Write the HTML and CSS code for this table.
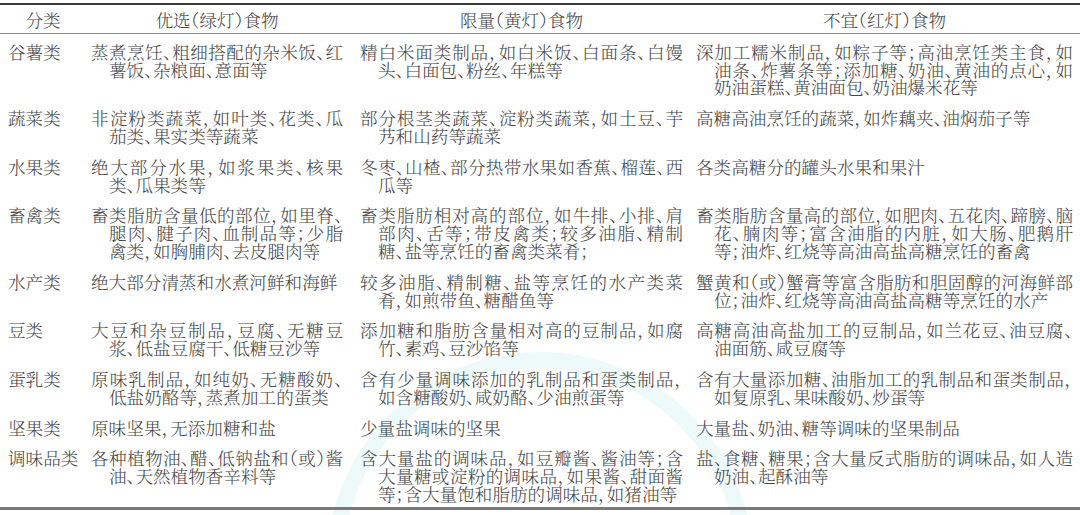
FILE: index.html
```html
<!DOCTYPE html>
<html lang="zh-CN">
<head>
<meta charset="utf-8">
<title>食物红绿灯</title>
<link rel="stylesheet" href="styles.css">
</head>
<body>
<svg class="watermark" width="1080" height="515" viewBox="0 0 1080 515" aria-hidden="true">
  <circle cx="540" cy="565" r="205" fill="none" stroke="#eef9fa" stroke-width="16"/>
</svg>
<div class="table">
  <div class="row head">
    <div class="cell c1 center">分类</div>
    <div class="cell c2 center">优选（绿灯）食物</div>
    <div class="cell c3 center">限量（黄灯）食物</div>
    <div class="cell c4 center">不宜（红灯）食物</div>
  </div>

  <div class="row">
    <div class="cell c1">谷薯类</div>
    <div class="cell c2"><span class="ln j">蒸煮烹饪、粗细搭配的杂米饭、红</span><span class="ln in">薯饭、杂粮面、意面等</span></div>
    <div class="cell c3"><span class="ln j">精白米面类制品，如白米饭、白面条、白馒</span><span class="ln in">头、白面包、粉丝、年糕等</span></div>
    <div class="cell c4"><span class="ln j">深加工糯米制品，如粽子等；高油烹饪类主食，如</span><span class="ln in j">油条、炸薯条等；添加糖、奶油、黄油的点心，如</span><span class="ln in">奶油蛋糕、黄油面包、奶油爆米花等</span></div>
  </div>

  <div class="row">
    <div class="cell c1">蔬菜类</div>
    <div class="cell c2"><span class="ln j">非淀粉类蔬菜，如叶类、花类、瓜</span><span class="ln in">茄类、果实类等蔬菜</span></div>
    <div class="cell c3"><span class="ln j">部分根茎类蔬菜、淀粉类蔬菜，如土豆、芋</span><span class="ln in">艿和山药等蔬菜</span></div>
    <div class="cell c4"><span class="ln">高糖高油烹饪的蔬菜，如炸藕夹、油焖茄子等</span></div>
  </div>

  <div class="row">
    <div class="cell c1">水果类</div>
    <div class="cell c2"><span class="ln j">绝大部分水果，如浆果类、核果</span><span class="ln in">类、瓜果类等</span></div>
    <div class="cell c3"><span class="ln j">冬枣、山楂、部分热带水果如香蕉、榴莲、西</span><span class="ln in">瓜等</span></div>
    <div class="cell c4"><span class="ln">各类高糖分的罐头水果和果汁</span></div>
  </div>

  <div class="row">
    <div class="cell c1">畜禽类</div>
    <div class="cell c2"><span class="ln j">畜类脂肪含量低的部位，如里脊、</span><span class="ln in j">腿肉、腱子肉、血制品等；少脂</span><span class="ln in">禽类，如胸脯肉、去皮腿肉等</span></div>
    <div class="cell c3"><span class="ln j">畜类脂肪相对高的部位，如牛排、小排、肩</span><span class="ln in j">部肉、舌等；带皮禽类；较多油脂、精制</span><span class="ln in">糖、盐等烹饪的畜禽类菜肴；</span></div>
    <div class="cell c4"><span class="ln j">畜类脂肪含量高的部位，如肥肉、五花肉、蹄膀、脑</span><span class="ln in j">花、腩肉等；富含油脂的内脏，如大肠、肥鹅肝</span><span class="ln in">等；油炸、红烧等高油高盐高糖烹饪的畜禽</span></div>
  </div>

  <div class="row">
    <div class="cell c1">水产类</div>
    <div class="cell c2"><span class="ln">绝大部分清蒸和水煮河鲜和海鲜</span></div>
    <div class="cell c3"><span class="ln j">较多油脂、精制糖、盐等烹饪的水产类菜</span><span class="ln in">肴，如煎带鱼、糖醋鱼等</span></div>
    <div class="cell c4"><span class="ln j">蟹黄和（或）蟹膏等富含脂肪和胆固醇的河海鲜部</span><span class="ln in">位；油炸、红烧等高油高盐高糖等烹饪的水产</span></div>
  </div>

  <div class="row">
    <div class="cell c1">豆类</div>
    <div class="cell c2"><span class="ln j">大豆和杂豆制品，豆腐、无糖豆</span><span class="ln in">浆、低盐豆腐干、低糖豆沙等</span></div>
    <div class="cell c3"><span class="ln j">添加糖和脂肪含量相对高的豆制品，如腐</span><span class="ln in">竹、素鸡、豆沙馅等</span></div>
    <div class="cell c4"><span class="ln j">高糖高油高盐加工的豆制品，如兰花豆、油豆腐、</span><span class="ln in">油面筋、咸豆腐等</span></div>
  </div>

  <div class="row">
    <div class="cell c1">蛋乳类</div>
    <div class="cell c2"><span class="ln j">原味乳制品，如纯奶、无糖酸奶、</span><span class="ln in">低盐奶酪等，蒸煮加工的蛋类</span></div>
    <div class="cell c3"><span class="ln j">含有少量调味添加的乳制品和蛋类制品，</span><span class="ln in">如含糖酸奶、咸奶酪、少油煎蛋等</span></div>
    <div class="cell c4"><span class="ln j">含有大量添加糖、油脂加工的乳制品和蛋类制品，</span><span class="ln in">如复原乳、果味酸奶、炒蛋等</span></div>
  </div>

  <div class="row">
    <div class="cell c1">坚果类</div>
    <div class="cell c2"><span class="ln">原味坚果，无添加糖和盐</span></div>
    <div class="cell c3"><span class="ln">少量盐调味的坚果</span></div>
    <div class="cell c4"><span class="ln">大量盐、奶油、糖等调味的坚果制品</span></div>
  </div>

  <div class="row last">
    <div class="cell c1">调味品类</div>
    <div class="cell c2"><span class="ln j">各种植物油、醋、低钠盐和（或）酱</span><span class="ln in">油、天然植物香辛料等</span></div>
    <div class="cell c3"><span class="ln j">含大量盐的调味品，如豆瓣酱、酱油等；含</span><span class="ln in j">大量糖或淀粉的调味品，如果酱、甜面酱</span><span class="ln in">等；含大量饱和脂肪的调味品，如猪油等</span></div>
    <div class="cell c4"><span class="ln j">盐、食糖、糖果；含大量反式脂肪的调味品，如人造</span><span class="ln in">奶油、起酥油等</span></div>
  </div>
</div>
</body>
</html>
```
FILE: styles.css
```css
html, body {
  margin: 0;
  padding: 0;
  background: #ffffff;
}

body {
  position: relative;
  width: 1080px;
  height: 515px;
  overflow: hidden;
  padding-top: 3px;
  box-sizing: border-box;
  font-family: "Noto Serif CJK SC", "Noto Sans CJK SC", serif;
  font-weight: 300;
  font-size: 17.6px;
  line-height: 17.8px;
  color: #474747;
  font-feature-settings: "halt" 1;
}

.watermark {
  position: absolute;
  left: 0;
  top: 0;
  pointer-events: none;
}

.table {
  position: relative;
  border-top: 2px solid #3a3a3a;
  border-bottom: 3px solid #7a7a7a;
}

.row {
  display: grid;
  grid-template-columns: 83px 269px 336px 392px;
  padding: 9px 0 4px;
}

.row.head {
  padding: 6px 0 4px;
  border-bottom: 1px solid #8c8c8c;
}

.cell {
  padding-left: 8px;
  white-space: nowrap;
}

.c1 { padding-right: 5px; }
.c2 { padding-right: 9px; }
.c3 { padding-right: 5px; }
.c4 { padding-right: 7px; }

.center {
  text-align: center;
}

.ln {
  display: block;
  text-align: left;
}

.ln.in {
  padding-left: 18px;
}

.ln.j {
  text-align: justify;
  text-align-last: justify;
}
```
